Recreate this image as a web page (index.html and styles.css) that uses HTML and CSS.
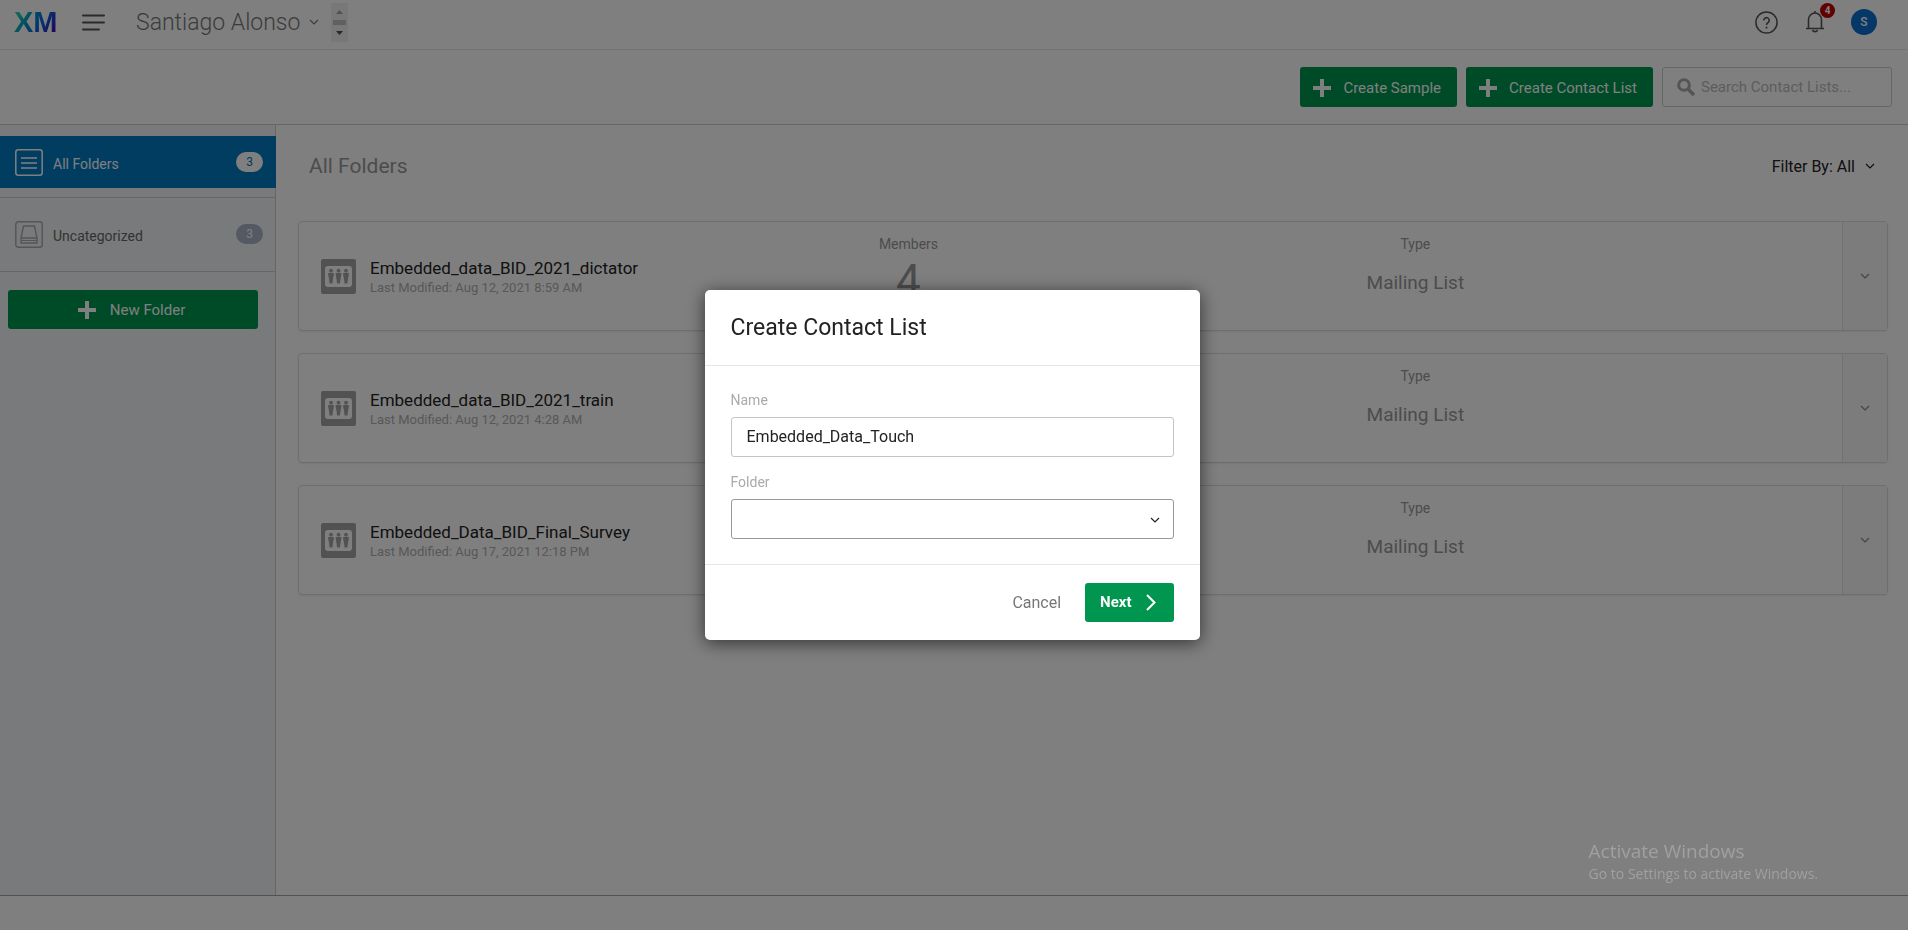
FILE: index.html
```html
<!DOCTYPE html>
<html lang="en">
<head>
<meta charset="utf-8">
<title>Contacts</title>
<link rel="stylesheet" href="styles.css">
</head>
<body>
<svg class="defs" aria-hidden="true">
  <symbol id="plus" viewBox="0 0 18 18"><path d="M7 0h4v7h7v4h-7v7H7v-7H0V7h7z"/></symbol>
  <symbol id="chevron" viewBox="0 0 10 6"><path d="M1 1l4 4 4-4" fill="none" stroke="currentColor" stroke-width="1.2"/></symbol>
  <symbol id="people" viewBox="0 0 35 35">
    <rect width="35" height="35" rx="2" fill="#a5a5a5"/>
    <rect x="4" y="7" width="27" height="21" rx="3" fill="#fff"/>
    <g fill="#a5a5a5">
      <circle cx="10" cy="11.700" r="1.900"/><path d="M7 15q0-1 1-1h4q1 0 1 1l-1 5-.6 4.500H8.600L8 20z"/>
      <circle cx="17.500" cy="11.700" r="1.900"/><path d="M14.500 15q0-1 1-1h4q1 0 1 1l-1 5-.6 4.500h-2.800l-.6-4.500z"/>
      <circle cx="25" cy="11.700" r="1.900"/><path d="M22 15q0-1 1-1h4q1 0 1 1l-1 5-.6 4.500h-2.800L23 20z"/>
    </g>
  </symbol>
</svg>

<div class="page">
  <header class="topbar">
    <a class="logo" href="#">XM</a>
    <button class="icon-btn menu" aria-label="Menu">
      <svg width="23" height="17" viewBox="0 0 23 17"><path d="M1 1.500h21M1 8.500h21M1 15.500h16" stroke="#555" stroke-width="2" stroke-linecap="round"/></svg>
    </button>
    <button class="account">Santiago Alonso <svg width="10" height="6"><use href="#chevron"/></svg></button>
    <svg class="scroller" width="17" height="39" viewBox="0 0 17 39">
      <rect width="17" height="39" fill="#f1f1f1"/>
      <path d="M5 11l3.500-4 3.500 4z" fill="#a3a3a3"/>
      <rect x="2" y="17" width="13" height="5" fill="#c1c1c1"/>
      <path d="M5 28l3.500 4 3.500-4z" fill="#505050"/>
    </svg>
    <div class="tools">
      <button class="icon-btn" aria-label="Help">
        <svg width="23" height="23" viewBox="0 0 23 23" fill="none" stroke="#555"><circle cx="11.500" cy="11.500" r="10.600" stroke-width="1.500"/><path d="M8.800 9.400a2.700 2.700 0 1 1 4.300 2.100q-1.600 1-1.600 2.600" stroke-width="1.600"/><path d="M11.500 15.700v1.800" stroke-width="1.800"/></svg>
      </button>
      <button class="icon-btn bell" aria-label="Notifications">
        <svg width="20" height="22" viewBox="0 0 20 22" fill="none" stroke="#555" stroke-width="1.600"><path d="M10 0v2M1 17.500h18M3.500 17V9a6.500 7 0 0 1 13 0v8M7.500 19a2.600 2.300 0 0 0 5 0"/></svg>
        <span class="badge">4</span>
      </button>
      <button class="avatar">S</button>
    </div>
  </header>

  <div class="actions">
    <button class="btn"><svg width="18" height="18"><use href="#plus"/></svg>Create Sample</button>
    <button class="btn"><svg width="18" height="18"><use href="#plus"/></svg>Create Contact List</button>
    <label class="search">
      <svg width="18" height="18" viewBox="0 0 18 18" fill="none" stroke="#aaa"><circle cx="7" cy="7" r="5.300" stroke-width="3"/><path d="M11 11l6 6" stroke-width="3.600"/></svg>
      <input type="text" placeholder="Search Contact Lists..." aria-label="Search Contact Lists">
    </label>
  </div>

  <div class="body">
    <nav class="sidebar">
      <a class="folder active" href="#">
        <svg width="28" height="27" viewBox="0 0 28 27" fill="none" stroke="#fff"><rect x=".8" y=".8" width="26.400" height="25.400" rx="2.500" stroke-width="1.500"/><path d="M6 9h16M6 14h16M6 19h16" stroke-width="1.400"/></svg>
        <span>All Folders</span><span class="count">3</span>
      </a>
      <div class="group">
        <a class="folder" href="#">
          <svg width="28" height="27" viewBox="0 0 28 27" fill="none" stroke="#aaa" stroke-width="1.400"><rect x=".8" y=".8" width="26.400" height="25.400" rx="2.500"/><path d="M8.500 5h11l2.500 12v5H6v-5zM6 17h16"/><path d="M6 19.500h16" stroke-width="1"/></svg>
          <span>Uncategorized</span><span class="count">3</span>
        </a>
      </div>
      <button class="btn new-folder"><svg width="18" height="18"><use href="#plus"/></svg>New Folder</button>
    </nav>

    <main class="content">
      <div class="content-head">
        <h1>All Folders</h1>
        <button class="filter">Filter By: All <svg width="10" height="6"><use href="#chevron"/></svg></button>
      </div>

      <article class="card">
        <div class="name"><svg width="35" height="35"><use href="#people"/></svg><div><h2>Embedded_data_BID_2021_dictator</h2><p>Last Modified: Aug 12, 2021 8:59 AM</p></div></div>
        <div class="fact"><span>Members</span><b class="number">4</b></div>
        <div class="fact"><span>Type</span><b>Mailing List</b></div>
        <button class="more" aria-label="Options"><svg width="10" height="6"><use href="#chevron"/></svg></button>
      </article>
      <article class="card">
        <div class="name"><svg width="35" height="35"><use href="#people"/></svg><div><h2>Embedded_data_BID_2021_train</h2><p>Last Modified: Aug 12, 2021 4:28 AM</p></div></div>
        <div class="fact"></div>
        <div class="fact"><span>Type</span><b>Mailing List</b></div>
        <button class="more" aria-label="Options"><svg width="10" height="6"><use href="#chevron"/></svg></button>
      </article>
      <article class="card">
        <div class="name"><svg width="35" height="35"><use href="#people"/></svg><div><h2>Embedded_Data_BID_Final_Survey</h2><p>Last Modified: Aug 17, 2021 12:18 PM</p></div></div>
        <div class="fact"></div>
        <div class="fact"><span>Type</span><b>Mailing List</b></div>
        <button class="more" aria-label="Options"><svg width="10" height="6"><use href="#chevron"/></svg></button>
      </article>
    </main>
  </div>
  <footer class="footer"></footer>
</div>

<div class="overlay">
  <form class="modal" role="dialog" aria-modal="true" aria-labelledby="modal-title">
    <h2 class="modal-title" id="modal-title">Create Contact List</h2>
    <div class="fields">
      <label for="list-name">Name</label>
      <input id="list-name" type="text" value="Embedded_Data_Touch">
      <label for="list-folder">Folder</label>
      <div class="select">
        <select id="list-folder"><option value=""></option></select>
        <svg width="10" height="6"><use href="#chevron"/></svg>
      </div>
    </div>
    <div class="modal-foot">
      <button type="button" class="cancel">Cancel</button>
      <button type="button" class="btn next">Next <svg width="10" height="17" viewBox="0 0 10 17"><path d="M1 1l7.500 7.500L1 16" fill="none" stroke="#fff" stroke-width="2"/></svg></button>
    </div>
  </form>
</div>

<aside class="watermark"><strong>Activate Windows</strong><span>Go to Settings to activate Windows.</span></aside>
</body>
</html>
```
FILE: styles.css
```css
* { box-sizing: border-box; }
body { margin: 0; font-family: Roboto, "Liberation Sans", sans-serif; font-size: 16px; color: #222; background: #fff; }
h1, h2, p { margin: 0; font-weight: 400; }
button, input, select { font: inherit; color: inherit; }
button { border: 0; background: none; padding: 0; }
a { color: inherit; text-decoration: none; }
svg { display: block; flex: none; }
.defs { position: absolute; width: 0; height: 0; }

.page { min-height: 100vh; display: flex; flex-direction: column; }

/* Top bar */
.topbar { display: flex; align-items: center; height: 50px; padding: 0 31px 5px 14px; border-bottom: 1px solid #e9e9e9; }
.logo { width: 68px; font: bold 29px/32px "Liberation Sans", sans-serif; color: transparent; background: linear-gradient(125deg, #21dbaa 6px, #0096c8 20px, #0768dd 32px, #4400b8 50px) no-repeat; background-clip: text; -webkit-background-clip: text; }
.menu { margin-right: 31px; }
.account { display: flex; align-items: center; gap: 9px; margin-right: 12px; font-size: 23px; font-weight: 300; color: #777; }
.tools { display: flex; align-items: center; margin-left: auto; }
.bell { position: relative; margin: 0 26px 0 27px; }
.badge { position: absolute; top: -8px; right: -10px; width: 15px; height: 15px; border-radius: 50%; background: #c00000; color: #fff; font-size: 10px; font-weight: 700; line-height: 15px; text-align: center; }
.avatar { width: 26px; height: 26px; border-radius: 50%; background: #0b6ed0; color: #fff; font-size: 12px; font-weight: 500; }

/* Action row */
.actions { display: flex; justify-content: flex-end; gap: 9px; padding: 17px 16px; border-bottom: 1px solid #ccc; }
.btn { display: flex; align-items: center; gap: 12px; height: 40px; padding: 0 16px 0 13px; border-radius: 3px; background: #00964f; color: #fff; fill: #fff; font-size: 15px; }
.actions .btn { padding-top: 2px; }
.search { display: flex; align-items: center; gap: 6px; width: 230px; height: 40px; padding: 0 14px; border: 1px solid #ccc; border-radius: 3px; }
.search input { flex: 1; min-width: 0; border: 0; padding: 0; outline: 0; background: none; font-size: 15px; }
.search input::placeholder { color: #bbb; opacity: 1; }

/* Sidebar */
.body { flex: 1; display: flex; }
.sidebar { width: 276px; padding-top: 11px; background: #f3f5f8; border-right: 1px solid #ccc; }
.folder { display: flex; align-items: center; gap: 10px; height: 52px; padding: 0 12px 0 15px; font-size: 14px; color: #666; }
.folder span { padding-top: 3px; }
.folder.active { margin-right: -1px; padding-right: 13px; background: #007ac3; color: #fff; }
.folder .count { margin-left: auto; width: 27px; padding: 0; border-radius: 10px; background: #a9b2c8; color: #fff; font-size: 12px; line-height: 20px; text-align: center; }
.folder.active .count { background: #fff; color: #007ac3; }
.group { margin-top: 9px; padding: 10px 0 11px; border: solid #ccc; border-width: 1px 0; }
.new-folder { width: calc(100% - 25px); height: 39px; margin: 18px 8px; justify-content: center; gap: 14px; }

/* Lists */
.content { flex: 1; padding: 24px 20px 24px 22px; }
.content-head { display: flex; justify-content: space-between; align-items: center; height: 34px; margin: 0 13px 38px 11px; }
.content-head h1 { font-size: 21px; color: #999; }
.filter { display: flex; align-items: center; gap: 10px; }
.card { display: grid; grid-template-columns: 230fr 330fr 327fr 113fr 45px; height: 110px; margin-bottom: 22px; border: 1px solid #dcdcdc; border-radius: 4px; box-shadow: 0 1px 2px #eee; }
.name { display: flex; align-items: center; gap: 14px; padding-left: 22px; white-space: nowrap; }
.name h2 { padding-top: 2px; font-size: 17px; line-height: 22px; }
.name p { font-size: 13px; line-height: 18px; color: #b0b0b0; }
.fact { display: flex; flex-direction: column; align-items: center; padding-top: 12px; font-size: 14px; line-height: 20px; color: #999; }
.fact b { font-size: 19px; font-weight: 400; line-height: 58px; }
.fact .number { font-size: 44px; line-height: 54px; }
.more { grid-column: 5; display: grid; place-items: center; border-left: 1px solid #e4e4e4; background: #f8f8f8; color: #888; }
.footer { height: 35px; border-top: 1px solid #a4a4a4; }

/* Dialog */
.overlay { position: fixed; inset: 0; display: grid; place-items: center; padding: 0 4px 1px 0; background: rgba(0, 0, 0, .5); }
.modal { width: 495px; border-radius: 5px; background: #fff; box-shadow: 0 3px 18px rgba(0, 0, 0, .6); }
.modal-title { padding: 0 26px; font-size: 23px; line-height: 75px; border-bottom: 1px solid #e6e6e6; }
.fields { padding: 24px 26px 25px; }
.fields label { display: block; font-size: 14px; line-height: 20px; margin-bottom: 7px; color: #aaa; }
.fields input, .fields select { display: block; width: 100%; height: 40px; padding: 0 15px; border: 1px solid #c4c4c4; border-radius: 3px; background: #fff; }
.fields input { margin-bottom: 15px; }
.fields select { appearance: none; border-color: #999; }
.select { position: relative; }
.select svg { position: absolute; right: 14px; top: 18px; pointer-events: none; }
.modal-foot { display: flex; justify-content: flex-end; align-items: center; gap: 24px; padding: 18px 26px; border-top: 1px solid #e6e6e6; }
.cancel { color: #777; }
.next { height: 39px; font-weight: 700; gap: 14px; padding: 0 18px 0 15px; }

.watermark { position: fixed; right: 90px; bottom: 46px; display: flex; flex-direction: column; font: 14px/20px "Open Sans", sans-serif; color: #a0a0a0; }
.watermark strong { font-weight: 400; font-size: 19px; line-height: 26px; }
```
